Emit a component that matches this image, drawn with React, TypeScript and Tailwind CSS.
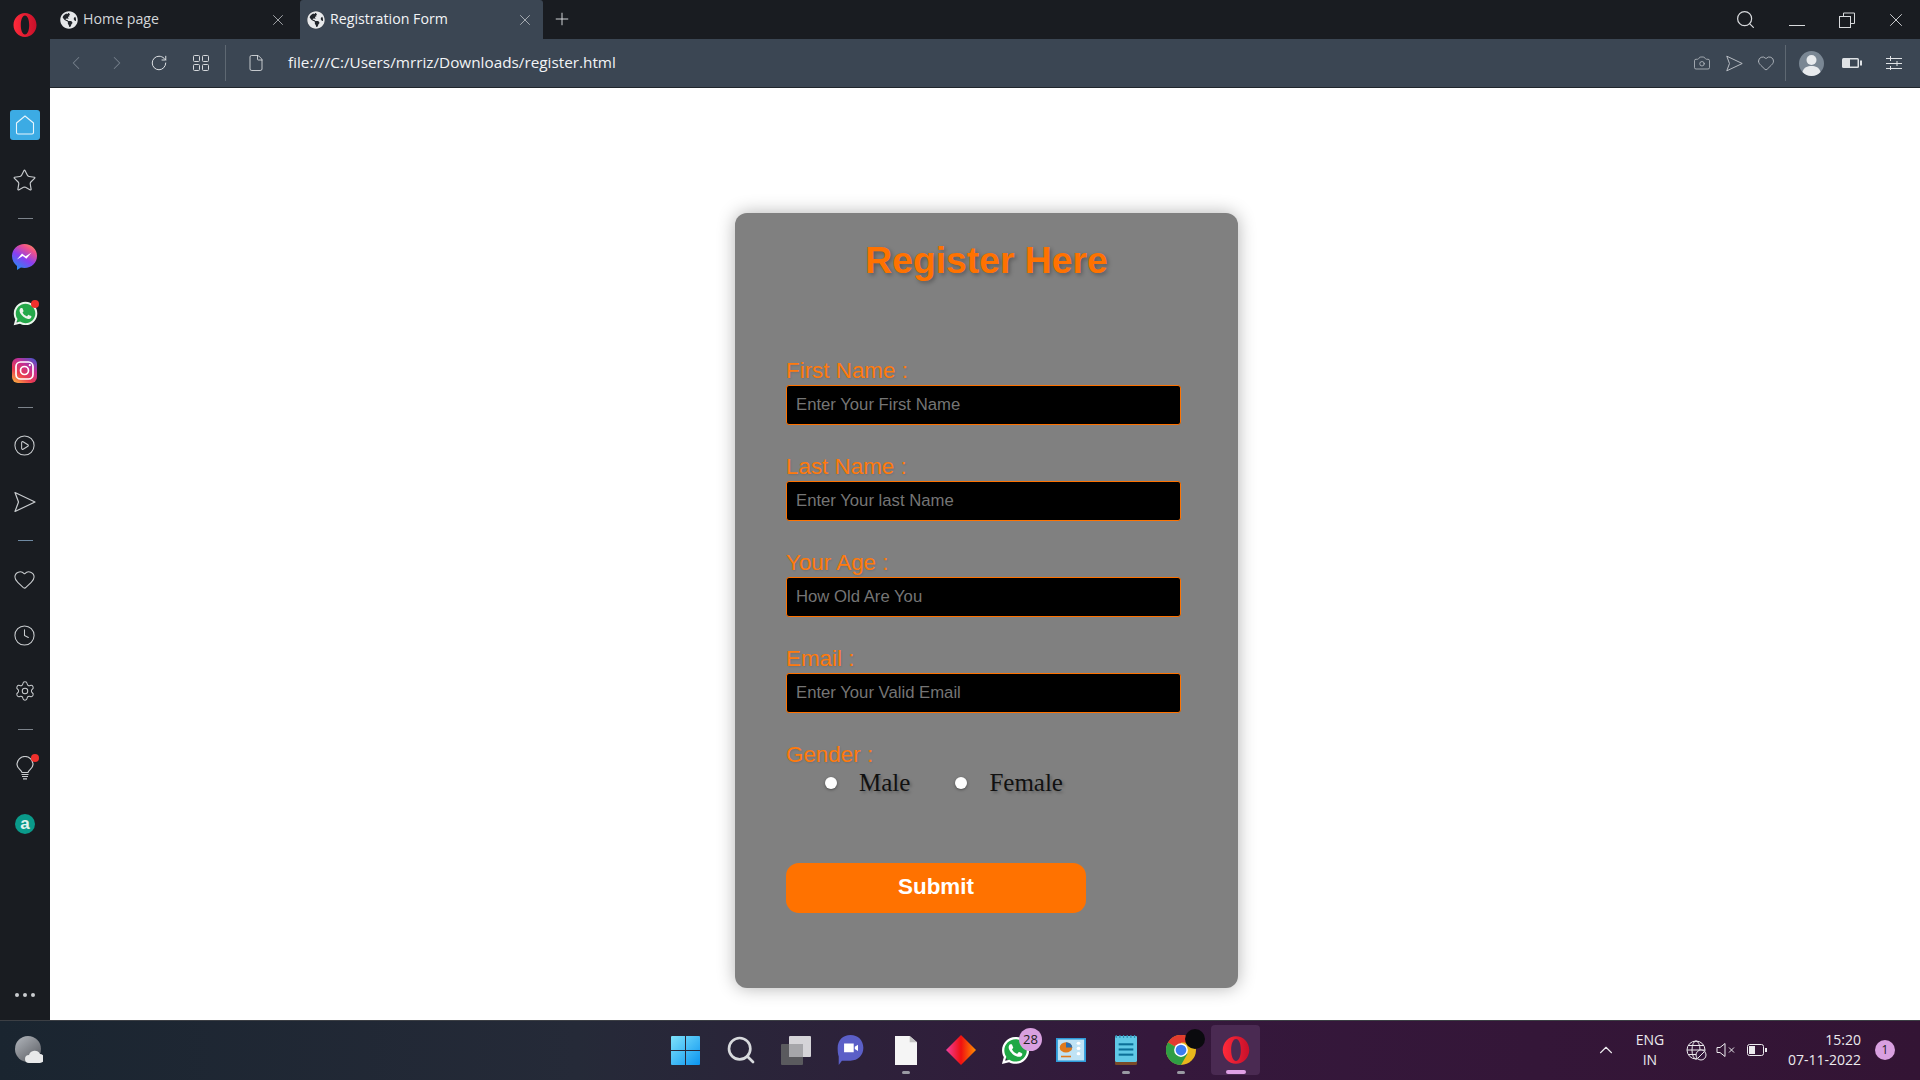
import type { ReactNode } from "react";
import {
  Camera,
  ChevronLeft,
  ChevronRight,
  ChevronUp,
  CirclePlay,
  Clock,
  File,
  Heart,
  Plus,
  RotateCw,
  Search,
  Settings,
  Star,
  X,
} from "lucide-react";
import { FaGlobeAmericas, FaWhatsapp } from "react-icons/fa";

const uiFont = "font-['Open_Sans','Noto_Sans',sans-serif]";

function OperaLogo({ size = 26 }: { size?: number }) {
  return (
    <svg width={size} height={size} viewBox="0 0 26 26">
      <defs>
        <linearGradient id="opera-red" x1="0" y1="0" x2="1" y2="0">
          <stop offset="0" stopColor="#ff2a3a" />
          <stop offset="1" stopColor="#c8102a" />
        </linearGradient>
      </defs>
      <path
        fillRule="evenodd"
        fill="url(#opera-red)"
        d="M13 1c6.200 0 11.500 5.400 11.500 12S19.200 25 13 25 1.500 19.600 1.500 13 6.800 1 13 1Zm0 2.500c-2.600 0-4.200 4.300-4.200 9.500s1.600 9.500 4.200 9.500 4.200-4.300 4.200-9.500-1.600-9.500-4.200-9.500Z"
      />
    </svg>
  );
}

function SendArrow({ size = 22, className = "" }: { size?: number; className?: string }) {
  return (
    <svg width={size} height={size} viewBox="0 0 22 22" fill="none" stroke="currentColor" strokeWidth="1.200" strokeLinejoin="round" className={className}>
      <path d="M1 1.500 21 11 1 20.500 4.500 11Z" />
    </svg>
  );
}

function TabGlobe() {
  return (
    <span className="flex h-[18px] w-[18px] shrink-0 items-center justify-center rounded-full bg-[#20242a]">
      <FaGlobeAmericas className="h-[18px] w-[18px] text-[#e6e8ea]" />
    </span>
  );
}

function Tab({ title, active }: { title: string; active?: boolean }) {
  return (
    <div
      className={
        active
          ? "flex h-[39px] w-[243px] items-center rounded-t-[3px] bg-[#3b4653] pl-[7px] pr-[9px] text-[#f2f4f6]"
          : "flex h-[39px] w-[250px] items-center pl-[10px] pr-[13px] text-[#d3d6d9]"
      }
    >
      <TabGlobe />
      <span className="ml-[5px] text-[14.2px] leading-none">{title}</span>
      <X className="ml-auto h-[18px] w-[18px] text-[#c9ccd0]" strokeWidth={1} />
    </div>
  );
}

function TopBar() {
  return (
    <div className={`flex h-[39px] bg-[#191c21] ${uiFont}`}>
      <div className="flex w-[50px] shrink-0 items-center justify-center pt-[10px]">
        <OperaLogo />
      </div>
      <Tab title="Home page" />
      <Tab title="Registration Form" active />
      <Plus className="ml-[9px] mt-[9px] h-[20px] w-[20px] text-[#e3e5e8]" strokeWidth={1.1} />
      <div className="ml-auto flex items-center pr-[13px] text-[#d8dadd]">
        <Search className="h-[21px] w-[21px]" strokeWidth={1.4} />
        <div className="ml-[33px] mt-[12px] h-[1px] w-[16px] bg-[#d8dadd]" />
        <svg width="16" height="16" viewBox="0 0 16 16" fill="none" stroke="currentColor" strokeWidth="1" className="ml-[34px]">
          <path d="M4.500 4.500V1h11v10.500H12" />
          <rect x="0.500" y="4.500" width="11" height="11" />
        </svg>
        <X className="ml-[30px] h-[22px] w-[22px]" strokeWidth={1} />
      </div>
    </div>
  );
}

function Sliders() {
  return (
    <svg width="16" height="14" viewBox="0 0 16 14" fill="none" stroke="#dfe2e5" strokeWidth="1" className="ml-[24px]">
      <path d="M0 2.500h16M0 7.500h16M0 12.500h16M4.500 0v5M11 5v5M4.500 10v4" />
    </svg>
  );
}

function ToolBar() {
  return (
    <div className={`bg-[#191c21] pl-[50px] ${uiFont}`}>
      <div className="flex h-[49px] items-center border-b border-[#20262c] bg-[#3b4653]">
        <ChevronLeft className="ml-[15px] h-[22px] w-[22px] text-[#76808b]" strokeWidth={1.1} />
        <ChevronRight className="ml-[19px] h-[22px] w-[22px] text-[#76808b]" strokeWidth={1.1} />
        <RotateCw className="ml-[22px] h-[18px] w-[18px] text-[#e0e3e6]" strokeWidth={1.300} />
        <svg width="16" height="16" viewBox="0 0 16 16" fill="none" stroke="#d5d8dc" strokeWidth="1" className="ml-[25px]">
          <rect x="0.500" y="0.500" width="6" height="6" rx="1" />
          <rect x="9.500" y="0.500" width="6" height="6" rx="1" />
          <rect x="0.500" y="9.500" width="6" height="6" rx="1" />
          <rect x="9.500" y="9.500" width="6" height="6" rx="1" />
        </svg>
        <div className="ml-[16px] h-[36px] w-[1px] bg-[#5e6872]" />
        <File className="ml-[21px] h-[18px] w-[18px] text-[#e3e5e8]" strokeWidth={1.1} />
        <span className="ml-[23px] text-[15.3px] leading-none text-[#f2f4f6]">file:///C:/Users/mrriz/Downloads/register.html</span>
        <div className="ml-auto flex items-center pr-[18px] text-[#c0c5cb]">
          <Camera className="h-[18px] w-[18px]" strokeWidth={1} />
          <SendArrow size={17} className="ml-[15px]" />
          <Heart className="ml-[14px] h-[18px] w-[18px]" strokeWidth={1.100} />
          <div className="ml-[10px] h-[36px] w-[1px] bg-[#5e6872]" />
          <svg width="25" height="25" viewBox="0 0 25 25" className="ml-[13px]">
            <circle cx="12.500" cy="12.500" r="12.500" fill="#7a8794" />
            <circle cx="12.500" cy="9" r="5" fill="#e8ebee" />
            <path d="M3.500 21c1-4.500 5-6 9-6s8 1.500 9 6c-2.300 2.400-5.500 4-9 4s-6.700-1.600-9-4Z" fill="#e8ebee" />
          </svg>
          <svg width="20" height="10" viewBox="0 0 20 10" className="ml-[18px]">
            <rect x="0" y="0" width="17" height="10" rx="1.500" fill="#dfe2e5" />
            <rect x="8" y="1.500" width="7.500" height="7" fill="#3b4653" />
            <rect x="18" y="2.500" width="2" height="5" fill="#dfe2e5" />
          </svg>
          <Sliders />
        </div>
      </div>
    </div>
  );
}

function Divider({ className = "" }: { className?: string }) {
  return <div className={`h-[1px] w-[15px] bg-[#7c838b] ${className}`} />;
}

function Dot({ className = "" }: { className?: string }) {
  return <span className={`absolute h-[8px] w-[8px] rounded-full bg-[#f0302c] ${className}`} />;
}

function Slot({ children, className = "" }: { children: ReactNode; className?: string }) {
  return <div className={`relative flex h-[46px] w-[50px] items-center justify-center text-[#c9cccf] ${className}`}>{children}</div>;
}

function Messenger() {
  return (
    <svg width="25" height="26" viewBox="0 0 25 26" className="-ml-[1px]">
      <defs>
        <linearGradient id="msg" x1="0.200" y1="1" x2="0.800" y2="0">
          <stop offset="0" stopColor="#1e90f5" />
          <stop offset="0.450" stopColor="#8a3ff0" />
          <stop offset="0.800" stopColor="#f0508c" />
          <stop offset="1" stopColor="#f98a60" />
        </linearGradient>
      </defs>
      <path d="M12.500 0C19.500 0 25 5.200 25 12s-5.500 12-12.500 12c-1.300 0-2.500-.2-3.600-.5L5 26v-4C2 19.800 0 16.200 0 12 0 5.200 5.500 0 12.500 0Z" fill="url(#msg)" />
      <path d="M5 15.500 10 9.500l3.600 2.800L19.500 8.500l-5.100 6.200-3.600-2.800Z" fill="#fff" />
    </svg>
  );
}

function Instagram() {
  return (
    <svg width="25" height="25" viewBox="0 0 25 25" className="-ml-[1px]">
      <defs>
        <linearGradient id="ig" x1="0.100" y1="1" x2="0.800" y2="0">
          <stop offset="0" stopColor="#fbb040" />
          <stop offset="0.350" stopColor="#ea3a50" />
          <stop offset="0.700" stopColor="#c02f95" />
          <stop offset="1" stopColor="#5850c8" />
        </linearGradient>
      </defs>
      <rect width="25" height="25" rx="6" fill="url(#ig)" />
      <rect x="4" y="4" width="17" height="17" rx="4.500" fill="none" stroke="#fff" strokeWidth="1.700" />
      <circle cx="12.500" cy="12.500" r="4" fill="none" stroke="#fff" strokeWidth="1.700" />
      <circle cx="17.800" cy="7.200" r="1.100" fill="#fff" />
    </svg>
  );
}

function Bulb() {
  return (
    <svg width="18" height="24" viewBox="0 0 18 24" fill="none" stroke="currentColor" strokeWidth="1.200">
      <path d="M6 16.500C5.500 14 1 12.500 1 8.500a8 8 0 0 1 16 0c0 4-4.500 5.500-5 8Z" />
      <path d="M5.500 18.500h7M6 20.500h6M7 22.800h4" />
    </svg>
  );
}

function Sidebar() {
  return (
    <aside className="flex h-[932px] w-[50px] shrink-0 flex-col items-center bg-[#191c21] pt-[14px]">
      <Slot>
        <span className="flex h-[30px] w-[30px] items-center justify-center rounded-[3px] bg-[#3cabe4]">
          <svg width="20" height="20" viewBox="0 0 20 20" fill="none" stroke="#e8f5fc" strokeWidth="1.100" strokeLinejoin="round">
            <path d="M10 1 18.500 8v9.500a1.500 1.500 0 0 1-1.500 1.500H3a1.500 1.500 0 0 1-1.500-1.500V8Z" />
          </svg>
        </span>
      </Slot>
      <Slot className="mt-[9px]">
        <Star className="-ml-[1px] h-[25px] w-[25px]" strokeWidth={1.100} />
      </Slot>
      <Divider className="my-[15px]" />
      <Slot>
        <Messenger />
      </Slot>
      <Slot className="mt-[10px]">
        <span className="mt-[1px] flex h-[23px] w-[23px] items-center justify-center rounded-full bg-[#25a84a]">
          <FaWhatsapp className="h-[27px] w-[27px] shrink-0 text-[#eef3ee]" />
        </span>
        <Dot className="right-[11px] top-[10px]" />
      </Slot>
      <Slot className="mt-[11px]">
        <Instagram />
      </Slot>
      <Divider className="my-[14px]" />
      <Slot>
        <CirclePlay className="-ml-[1px] h-[23px] w-[23px]" strokeWidth={1.100} />
      </Slot>
      <Slot className="mt-[11px]">
        <SendArrow />
      </Slot>
      <div className="my-[15px] h-[1px] w-[15px] bg-[#6f8aa3]" />
      <Slot>
        <Heart className="-ml-[1px] h-[23px] w-[23px]" strokeWidth={1.100} />
      </Slot>
      <Slot className="mt-[10px]">
        <Clock className="-ml-[1px] h-[23px] w-[23px]" strokeWidth={1.100} />
      </Slot>
      <Slot className="mt-[10px]">
        <Settings className="h-[22px] w-[22px]" strokeWidth={1.100} />
      </Slot>
      <Divider className="my-[15px]" />
      <Slot>
        <Bulb />
        <Dot className="right-[11px] top-[9px]" />
      </Slot>
      <Slot className="mt-[10px]">
        <span className="flex h-[20px] w-[20px] items-center justify-center rounded-full bg-[#0a9a8a] pb-[2px] font-['Liberation_Sans',sans-serif] text-[17px] font-bold leading-none text-[#e0f2ef]">
          a
        </span>
      </Slot>
      <div className="mt-auto flex gap-[4px] pb-[23px]">
        <span className="h-[4px] w-[4px] rounded-full bg-[#c9cccf]" />
        <span className="h-[4px] w-[4px] rounded-full bg-[#c9cccf]" />
        <span className="h-[4px] w-[4px] rounded-full bg-[#c9cccf]" />
      </div>
    </aside>
  );
}

function Field({ label, placeholder }: { label: string; placeholder: string }) {
  return (
    <div className="mb-[29px]">
      <label className="block h-[27px] text-[22.4px] leading-[25px] text-[#ff7a0c] [text-shadow:1px_1px_2px_rgba(0,0,0,0.12)]">{label}</label>
      <input
        type="text"
        placeholder={placeholder}
        className="block h-[40px] w-[395px] rounded-[3px] border border-[#ff7200] bg-black px-[9px] text-[16.7px] text-white outline-none placeholder:text-[#757575]"
      />
    </div>
  );
}

function Radio({ label }: { label: string }) {
  return (
    <label className="flex items-center">
      <input type="radio" name="gender" className="h-[12px] w-[12px] appearance-none rounded-full bg-white shadow-[0_1px_3px_rgba(0,0,0,0.4)]" />
      <span className="ml-[22px] font-['Liberation_Serif',serif] text-[25px] leading-[28px] text-[#111] [text-shadow:2px_2px_3px_rgba(0,0,0,0.25)]">{label}</span>
    </label>
  );
}

function RegisterCard() {
  return (
    <form className="h-[775px] w-[503px] rounded-[12px] bg-[#808080] pl-[51px] pt-[25px] font-['Liberation_Sans',Arial,sans-serif] shadow-[0_0_18px_rgba(0,0,0,0.3)]">
      <h1 className="-ml-[51px] h-[120px] text-center text-[37.3px] font-bold leading-[44px] text-[#ff7200] [text-shadow:2px_2px_4px_rgba(0,0,0,0.3)]">
        Register Here
      </h1>
      <Field label="First Name :" placeholder="Enter Your First Name" />
      <Field label="Last Name :" placeholder="Enter Your last Name" />
      <Field label="Your Age :" placeholder="How Old Are You" />
      <Field label="Email :" placeholder="Enter Your Valid Email" />
      <div className="h-[27px] text-[22.4px] leading-[25px] text-[#ff7a0c] [text-shadow:1px_1px_2px_rgba(0,0,0,0.12)]">Gender :</div>
      <div className="flex h-[28px] items-center gap-[45px] pl-[39px]">
        <Radio label="Male" />
        <Radio label="Female" />
      </div>
      <button type="button" className="mt-[66px] block h-[50px] w-[300px] rounded-[13px] bg-[#ff7200] pb-[3px] text-[22.4px] font-bold text-white">
        Submit
      </button>
    </form>
  );
}

function WinLogo() {
  return (
    <svg width="29" height="29" viewBox="0 0 29 29">
      <defs>
        <linearGradient id="win" x1="0" y1="0" x2="1" y2="1">
          <stop offset="0" stopColor="#7fe3fb" />
          <stop offset="1" stopColor="#0a94f0" />
        </linearGradient>
      </defs>
      <path d="M1 0h13v14H0V1a1 1 0 0 1 1-1ZM15 0h13a1 1 0 0 1 1 1v13H15ZM0 15h14v14H1a1 1 0 0 1-1-1ZM15 15h14v13a1 1 0 0 1-1 1H15Z" fill="url(#win)" />
    </svg>
  );
}

function TaskIcon({ children, pip, active }: { children: ReactNode; pip?: boolean; active?: boolean }) {
  return (
    <div className={active ? "relative mx-[3px] flex h-[50px] w-[49px] items-center justify-center rounded-[4px] bg-[#4a2a52]" : "relative flex h-[50px] w-[55px] items-center justify-center"}>
      {children}
      {pip && <span className="absolute bottom-[1px] h-[3px] w-[8px] rounded-full bg-[#9a9aa3]" />}
      {active && <span className="absolute bottom-[1px] h-[4px] w-[20px] rounded-full bg-[#e0a0e6]" />}
    </div>
  );
}

function Chrome() {
  return (
    <svg width="30" height="30" viewBox="0 0 24 24">
      <circle cx="12" cy="12" r="12" fill="#e8b71c" />
      <path d="M12 12 1.600 6A12 12 0 0 1 22.400 6H12Z" fill="#e33b2e" />
      <path d="M12 12 1.600 6A12 12 0 0 0 12 24l5.200-9Z" fill="#2f9e44" />
      <circle cx="12" cy="12" r="5.500" fill="#fff" />
      <circle cx="12" cy="12" r="4.300" fill="#3b7cf0" />
    </svg>
  );
}

function Taskbar() {
  return (
    <footer className={`flex h-[60px] items-center border-t border-[#3c3f44] bg-[linear-gradient(90deg,#1a2530_0%,#252a38_30%,#35183c_60%,#331434_100%)] pb-[1px] ${uiFont}`}>
      <div className="w-[658px] shrink-0 pl-[15px]">
        <svg width="28" height="28" viewBox="0 0 28 28">
          <defs>
            <linearGradient id="moon" x1="0" y1="0" x2="0.800" y2="1">
              <stop offset="0" stopColor="#b3b7bd" />
              <stop offset="1" stopColor="#5e6167" />
            </linearGradient>
          </defs>
          <circle cx="13" cy="13" r="13" fill="url(#moon)" />
          <path d="M14 27a4 4 0 0 1 0-8 6 6 0 0 1 11-1 4.500 4.500 0 0 1 0 9Z" fill="#e8e9ea" />
        </svg>
      </div>
      <div className="flex shrink-0 items-center">
        <TaskIcon>
          <WinLogo />
        </TaskIcon>
        <TaskIcon>
          <Search className="h-[32px] w-[32px] text-[#d8dadd]" strokeWidth={2} />
        </TaskIcon>
        <TaskIcon>
          <span className="relative h-[29px] w-[30px]">
            <span className="absolute bottom-0 left-0 h-[21px] w-[22px] rounded-[1px] bg-[#5a5a5e]" />
            <span className="absolute right-0 top-0 h-[21px] w-[22px] rounded-[1px] bg-[#e8e8ea] opacity-90" />
            <span className="absolute left-[8px] top-[8px] h-[13px] w-[14px] bg-[#a6a6aa]" />
          </span>
        </TaskIcon>
        <TaskIcon>
          <svg width="29" height="30" viewBox="0 0 24 28">
            <path d="M12 0c7 0 12 5 12 12s-5 12-12 12H4l-3 4v-8C.2 18 0 15 0 12 0 5 5 0 12 0Z" fill="#5b5fc7" />
            <path d="M6 8h9v8H6ZM16 11l3-2v6l-3-2Z" fill="#fff" />
          </svg>
        </TaskIcon>
        <TaskIcon pip>
          <svg width="22" height="29" viewBox="0 0 18 28" preserveAspectRatio="none">
            <path d="M0 0h12l6 6v22H0Z" fill="#f5f5f5" />
            <path d="M12 0v6h6Z" fill="#c4c4c4" />
          </svg>
        </TaskIcon>
        <TaskIcon>
          <svg width="30" height="30" viewBox="0 0 25 29" preserveAspectRatio="none">
            <defs>
              <linearGradient id="rhomb" x1="0" y1="0" x2="1" y2="0">
                <stop offset="0" stopColor="#f040a0" />
                <stop offset="0.500" stopColor="#f01010" />
                <stop offset="1" stopColor="#ff9000" />
              </linearGradient>
            </defs>
            <path d="M12.500 0 25 14.500 12.500 29 0 14.500Z" fill="url(#rhomb)" />
          </svg>
        </TaskIcon>
        <TaskIcon>
          <span className="flex h-[26px] w-[26px] items-center justify-center rounded-full bg-[#1fa845]">
            <FaWhatsapp className="h-[31px] w-[31px] shrink-0 text-white" />
          </span>
          <span className="absolute right-[1px] top-[3px] flex h-[23px] w-[23px] items-center justify-center rounded-full bg-[#d9a0e0] text-[13px] text-[#222]">28</span>
        </TaskIcon>
        <TaskIcon>
          <svg width="30" height="24" viewBox="0 0 24 23" preserveAspectRatio="none">
            <rect width="24" height="23" fill="#2e9ad8" />
            <rect x="1.500" y="1.500" width="21" height="20" fill="#bfe3f5" />
            <circle cx="8" cy="9" r="5" fill="#e07a1c" />
            <path d="M8 9V4a5 5 0 0 1 5 5Z" fill="#2a6fb0" />
            <circle cx="18" cy="5" r="1.500" fill="#fff" />
            <circle cx="18" cy="10" r="1.500" fill="#fff" />
            <circle cx="18" cy="15" r="1.500" fill="#fff" />
            <rect x="4" y="17" width="8" height="1.500" fill="#e07a1c" />
          </svg>
        </TaskIcon>
        <TaskIcon pip>
          <svg width="22" height="30" viewBox="0 0 18 29" preserveAspectRatio="none">
            <rect y="1" width="18" height="28" rx="1" fill="#7a4a28" />
            <rect y="1" width="18" height="25" rx="1" fill="#5fc8e6" />
            <rect x="3" y="8" width="12" height="2" fill="#0b6f98" />
            <rect x="3" y="13" width="12" height="2" fill="#0b6f98" />
            <rect x="3" y="18" width="12" height="2" fill="#0b6f98" />
            <path d="M1 0v3M4 0v3M7 0v3M10 0v3M13 0v3M16 0v3" stroke="#2f8fb5" strokeWidth="1" />
          </svg>
        </TaskIcon>
        <TaskIcon pip>
          <Chrome />
          <span className="absolute right-[3px] top-[4px] h-[20px] w-[20px] rounded-full bg-[#0a0a0e]" />
        </TaskIcon>
        <TaskIcon active>
          <OperaLogo size={30} />
        </TaskIcon>
      </div>
      <div className="ml-auto flex items-center pr-[25px] text-[#eceaee]">
        <ChevronUp className="h-[22px] w-[22px]" strokeWidth={1.200} />
        <div className="ml-[17px] w-[32px] text-center text-[14px] leading-[20px]">
          <div>ENG</div>
          <div>IN</div>
        </div>
        <svg width="21" height="21" viewBox="0 0 21 21" fill="none" stroke="currentColor" strokeWidth="1" className="ml-[20px]">
          <circle cx="10" cy="10" r="9" />
          <ellipse cx="10" cy="10" rx="4" ry="9" />
          <path d="M1 10h18M2 5.500h16M2 14.500h16" />
          <circle cx="15" cy="15" r="5" fill="#35183c" />
          <path d="M12 18l6-6" />
        </svg>
        <svg width="20" height="16" viewBox="0 0 20 16" fill="none" stroke="currentColor" strokeWidth="1" className="ml-[9px]">
          <path d="M1 5.500h3L9 1.500v13l-5-4H1Z" />
          <path d="M13 5.500l5 5M18 5.500l-5 5" />
        </svg>
        <svg width="20" height="12" viewBox="0 0 20 12" fill="none" className="ml-[11px]">
          <rect x="0.500" y="0.500" width="16" height="11" rx="2" stroke="#eceaee" />
          <rect x="2" y="2" width="6" height="8" fill="#eceaee" />
          <rect x="18" y="4" width="2" height="4" fill="#eceaee" />
        </svg>
        <div className="ml-[21px] text-right text-[14px] leading-[20px]">
          <div>15:20</div>
          <div>07-11-2022</div>
        </div>
        <span className="ml-[14px] flex h-[20px] w-[20px] items-center justify-center rounded-full bg-[#d9a0e0] text-[12px] text-[#222]">1</span>
      </div>
    </footer>
  );
}

export default function App() {
  return (
    <div className="h-[1080px] w-[1920px] overflow-hidden bg-white">
      <TopBar />
      <ToolBar />
      <div className="flex h-[932px]">
        <Sidebar />
        <main className="flex flex-1 justify-center bg-white pl-[3px] pt-[125px]">
          <RegisterCard />
        </main>
      </div>
      <Taskbar />
    </div>
  );
}
